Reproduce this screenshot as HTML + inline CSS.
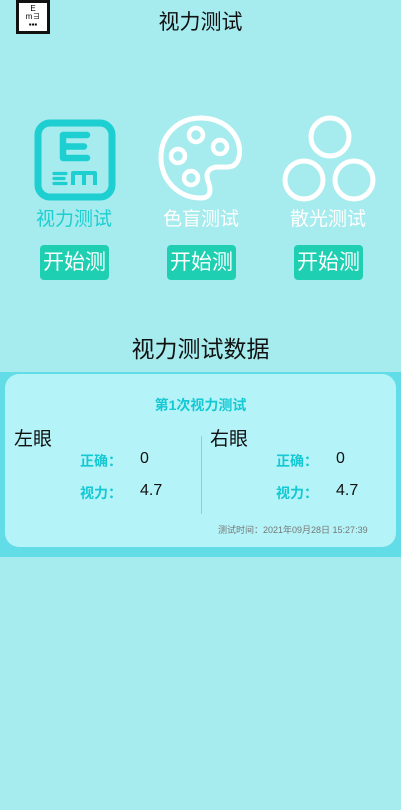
<!DOCTYPE html>
<html><head><meta charset="utf-8"><style>
*{margin:0;padding:0;box-sizing:border-box}
body{width:401px;height:810px;background:#a6ebee;font-family:"Liberation Sans","Noto Sans CJK SC",sans-serif;position:relative;overflow:hidden}
.abs{position:absolute}
.title{left:0;width:401px;top:6px;text-align:center;font-size:21px;color:#111}
.logo{left:16px;top:0;width:34px;height:34px;background:#111;padding:3px}
.logo div{background:#fff;width:100%;height:100%;font-size:8px;line-height:8px;text-align:center;color:#000;padding-top:2px}
.lbl{top:204px;width:100px;text-align:center;font-size:19px}
.btn{top:245px;width:69px;height:35px;background:#1fcfb2;border-radius:4px;color:#fff;font-size:21px;line-height:35px;text-align:center;overflow:hidden}
.band{left:0;top:372px;width:401px;height:185px;background:#62dde7}
.card{left:5px;top:374px;width:391px;height:173px;background:#b4f3f7;border-radius:14px}
.t{color:#14c8d4;font-weight:bold}
</style></head><body>
<div class="abs logo"><div>E<br>m∃<br>▪▪▪</div></div>
<div class="abs title">视力测试</div>

<svg class="abs" style="left:33px;top:118px" width="84" height="84" viewBox="0 0 84 84">
<rect x="5" y="5" width="74" height="74" rx="12" fill="none" stroke="#1dcfd0" stroke-width="7"/>
<path d="M54 17H30V40H54M30 28.5H51" fill="none" stroke="#1dcfd0" stroke-width="6.5" stroke-linejoin="round" stroke-linecap="round"/>
<path d="M21 55.5H33M21 60.5H31M21 65.5H33" fill="none" stroke="#1dcfd0" stroke-width="3.2" stroke-linecap="round"/>
<path d="M40 67V55H62V67M51 55V67" fill="none" stroke="#1dcfd0" stroke-width="4" stroke-linejoin="round"/>
</svg>
<svg class="abs" style="left:154px;top:112px" width="94" height="94" viewBox="0 0 94 94">
<path d="M47 6C24 6 7 23 7 45c0 24 18 41 40 41 6 0 9-3 9-8 0-6-3-9-3-14 0-6 5-9 11-9 10 0 18 2 21-10C89 25 72 6 47 6z" fill="none" stroke="#fff" stroke-width="5"/>
<circle cx="42" cy="23" r="7" fill="none" stroke="#fff" stroke-width="4.5"/>
<circle cx="66" cy="35" r="7" fill="none" stroke="#fff" stroke-width="4.5"/>
<circle cx="24" cy="44" r="7" fill="none" stroke="#fff" stroke-width="4.5"/>
<circle cx="37" cy="66" r="7" fill="none" stroke="#fff" stroke-width="4.5"/>
</svg>
<svg class="abs" style="left:282px;top:115px" width="96" height="88" viewBox="0 0 96 88">
<circle cx="48" cy="22" r="19" fill="none" stroke="#fff" stroke-width="5"/>
<circle cx="22" cy="65" r="19" fill="none" stroke="#fff" stroke-width="5"/>
<circle cx="72" cy="65" r="19" fill="none" stroke="#fff" stroke-width="5"/>
</svg>

<div class="abs lbl" style="left:24px;color:#1dcfd0">视力测试</div>
<div class="abs lbl" style="left:151px;color:#fff">色盲测试</div>
<div class="abs lbl" style="left:278px;color:#fff">散光测试</div>
<div class="abs btn" style="left:40px">开始测</div>
<div class="abs btn" style="left:167px">开始测</div>
<div class="abs btn" style="left:294px">开始测</div>

<div class="abs" style="left:0;width:401px;top:330px;text-align:center;font-size:23px;color:#111">视力测试数据</div>

<div class="abs band"></div>
<div class="abs card"></div>
<div class="abs t" style="left:0;width:401px;top:395px;text-align:center;font-size:14px">第1次视力测试</div>
<div class="abs" style="left:14px;top:424px;font-size:19px;color:#111">左眼</div>
<div class="abs" style="left:210px;top:424px;font-size:19px;color:#111">右眼</div>
<div class="abs" style="left:201px;top:436px;width:1px;height:78px;background:#9fc9cc"></div>
<div class="abs t" style="left:80px;top:451px;font-size:14px">正确：</div>
<div class="abs" style="left:140px;top:450px;font-size:16px;color:#111">0</div>
<div class="abs t" style="left:80px;top:483px;font-size:14px">视力：</div>
<div class="abs" style="left:140px;top:482px;font-size:16px;color:#111">4.7</div>
<div class="abs t" style="left:276px;top:451px;font-size:14px">正确：</div>
<div class="abs" style="left:336px;top:450px;font-size:16px;color:#111">0</div>
<div class="abs t" style="left:276px;top:483px;font-size:14px">视力：</div>
<div class="abs" style="left:336px;top:482px;font-size:16px;color:#111">4.7</div>
<div class="abs" style="left:218px;top:523px;font-size:9px;color:#777">测试时间：2021年09月28日 15:27:39</div>
</body></html>
